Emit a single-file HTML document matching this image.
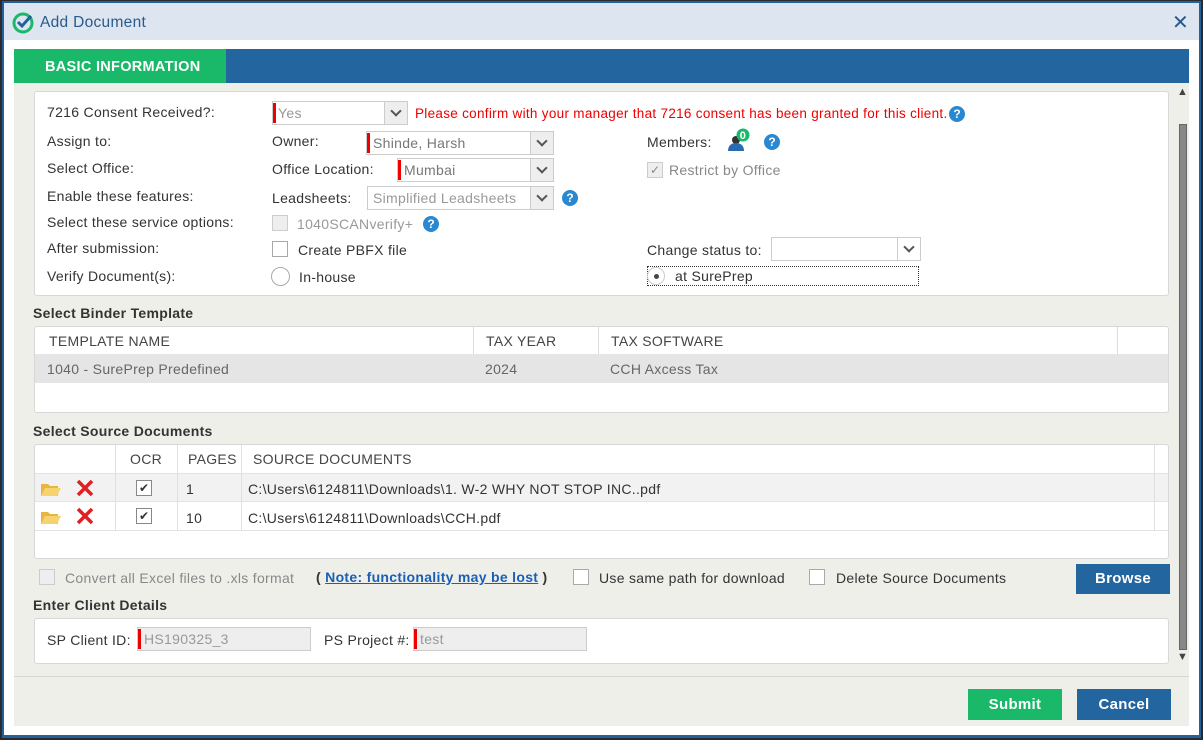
<!DOCTYPE html>
<html><head><meta charset="utf-8"><style>
*{margin:0;padding:0;box-sizing:border-box}
body{width:1203px;height:740px;background:#2b2b2b;font-family:"Liberation Sans",sans-serif;font-size:14px;letter-spacing:0.3px;color:#333;position:relative;overflow:hidden}
.a{position:absolute}
.win{left:2px;top:1px;width:1199px;height:737px;background:#24609c}
.in{left:4px;top:3px;width:1195px;height:732px;background:#fff}
.tb{left:4px;top:3px;width:1195px;height:37px;background:#dde5f0}
.t{white-space:nowrap}
.box{background:#fff;border:1px solid #d8d8d8;border-radius:3px}
.sel{height:24px;border:1px solid #ccc;background:#fff;color:#999}
.sel .ar{position:absolute;right:0;top:0;width:23px;height:22px;border-left:1px solid #ccc;background:#eee}
.sel .ar:after{content:"";position:absolute;left:7px;top:5px;width:6px;height:6px;border-right:2px solid #555;border-bottom:2px solid #555;transform:rotate(45deg)}
.red{position:absolute;left:0;top:1px;width:3px;height:20px;background:#e00}
.q{width:16px;height:16px;border-radius:50%;background:#2a88d0;color:#fff;font-size:12px;font-weight:bold;text-align:center;line-height:16px;letter-spacing:0}
.cb{width:16px;height:16px;border:1px solid #aaa;background:#fff;letter-spacing:0}
.bold{font-weight:bold}
.th{font-size:14px;color:#444}
.btn{color:#fff;font-weight:bold;font-size:15px;text-align:center}
</style></head><body>
<div class="a win"></div>
<div class="a in"></div>
<div class="a tb"></div>
<svg class="a" style="left:12px;top:12px" width="22" height="22" viewBox="0 0 22 22"><circle cx="11" cy="11" r="9" fill="none" stroke="#1ab96a" stroke-width="3"/><path d="M6 10l4 4 9-10" fill="none" stroke="#24609c" stroke-width="3"/></svg>
<div class="a t" style="left:40px;top:14px;font-size:15.5px;color:#2a5a8a">Add Document</div>
<div class="a t" style="left:1172px;top:10px;font-size:20px;color:#2a5a8a">✕</div>

<div class="a" style="left:14px;top:49px;width:1175px;height:34px;background:#23659f"></div>
<div class="a" style="left:14px;top:49px;width:212px;height:34px;background:#1ab96a"></div>
<div class="a t" style="left:45px;top:59px;color:#fff;font-weight:bold;font-size:14.5px">BASIC INFORMATION</div>
<div class="a" style="left:14px;top:83px;width:1175px;height:643px;background:#efefea"></div>
<div class="a" style="left:14px;top:676px;width:1175px;height:1px;background:#d5d5d5"></div>
<div class="a t" style="left:1177px;top:86px;font-size:11px;color:#444">▲</div>
<div class="a" style="left:1179px;top:124px;width:8px;height:526px;background:#888;border:1px solid #666"></div>
<div class="a t" style="left:1177px;top:651px;font-size:11px;color:#444">▼</div>

<div class="a box" style="left:34px;top:91px;width:1135px;height:205px"></div>
<div class="a t" style="left:47px;top:104px">7216 Consent Received?:</div>
<div class="a sel" style="left:272px;top:101px;width:136px"><div class="red"></div><span class="a" style="left:5px;top:3px">Yes</span><div class="ar"></div></div>
<div class="a t" style="left:415px;top:106px;color:#e00;font-size:13.5px">Please confirm with your manager that 7216 consent has been granted for this client.</div>
<div class="a q" style="left:949px;top:106px">?</div>

<div class="a t" style="left:47px;top:133px">Assign to:</div>
<div class="a t" style="left:272px;top:133px">Owner:</div>
<div class="a sel" style="left:366px;top:131px;width:188px"><div class="red"></div><span class="a" style="left:6px;top:3px;color:#777">Shinde, Harsh</span><div class="ar"></div></div>
<div class="a t" style="left:647px;top:134px">Members:</div>
<svg class="a" style="left:726px;top:128px" width="26" height="26"><circle cx="10" cy="12" r="4" fill="#333"/><path d="M2 23c0-6 4-8 8-8s8 2 8 8z" fill="#2a6ab0"/><circle cx="17" cy="7" r="6.5" fill="#1ab96a"/><text x="17" y="11" font-size="11" fill="#fff" font-weight="bold" text-anchor="middle" font-family="Liberation Sans">0</text></svg>
<div class="a q" style="left:764px;top:134px">?</div>

<div class="a t" style="left:47px;top:160px">Select Office:</div>
<div class="a t" style="left:272px;top:161px">Office Location:</div>
<div class="a sel" style="left:397px;top:158px;width:157px"><div class="red"></div><span class="a" style="left:6px;top:3px;color:#777">Mumbai</span><div class="ar"></div></div>
<div class="a cb" style="left:647px;top:162px;background:#eee;border-color:#ccc;color:#888;font-size:12px;text-align:center;line-height:14px">✓</div>
<div class="a t" style="left:669px;top:162px;color:#888">Restrict by Office</div>

<div class="a t" style="left:47px;top:188px">Enable these features:</div>
<div class="a t" style="left:272px;top:190px">Leadsheets:</div>
<div class="a sel" style="left:367px;top:186px;width:187px"><span class="a" style="left:5px;top:3px">Simplified Leadsheets</span><div class="ar"></div></div>
<div class="a q" style="left:562px;top:190px">?</div>

<div class="a t" style="left:47px;top:214px">Select these service options:</div>
<div class="a cb" style="left:272px;top:215px;background:#eee;border-color:#ccc"></div>
<div class="a t" style="left:297px;top:216px;color:#999">1040SCANverify+</div>
<div class="a q" style="left:423px;top:216px">?</div>

<div class="a t" style="left:47px;top:240px">After submission:</div>
<div class="a cb" style="left:272px;top:241px"></div>
<div class="a t" style="left:298px;top:242px">Create PBFX file</div>
<div class="a t" style="left:647px;top:242px">Change status to:</div>
<div class="a sel" style="left:771px;top:237px;width:150px"><div class="ar" style="background:#fff"></div></div>

<div class="a t" style="left:47px;top:268px">Verify Document(s):</div>
<div class="a" style="left:271px;top:267px;width:19px;height:19px;border:1px solid #aaa;border-radius:50%;background:#fff"></div>
<div class="a t" style="left:299px;top:269px">In-house</div>
<div class="a" style="left:647px;top:266px;width:272px;height:20px;border:1px dotted #333"></div>
<div class="a" style="left:647px;top:267px;width:18px;height:18px;border:1px solid #ccc;border-radius:50%;background:#fff"></div>
<div class="a" style="left:654px;top:274px;width:5px;height:5px;border-radius:50%;background:#444"></div>
<div class="a t" style="left:675px;top:268px">at SurePrep</div>

<div class="a t bold" style="left:33px;top:305px">Select Binder Template</div>
<div class="a box" style="left:34px;top:326px;width:1135px;height:87px"></div>
<div class="a" style="left:35px;top:354px;width:1133px;height:29px;background:#e5e5e5"></div>
<div class="a" style="left:473px;top:327px;width:1px;height:27px;background:#ddd"></div>
<div class="a" style="left:598px;top:327px;width:1px;height:27px;background:#ddd"></div>
<div class="a" style="left:1117px;top:327px;width:1px;height:27px;background:#ddd"></div>
<div class="a t th" style="left:49px;top:333px">TEMPLATE NAME</div>
<div class="a t th" style="left:486px;top:333px">TAX YEAR</div>
<div class="a t th" style="left:611px;top:333px">TAX SOFTWARE</div>
<div class="a t" style="left:47px;top:361px;color:#666">1040 - SurePrep Predefined</div>
<div class="a t" style="left:485px;top:361px;color:#666">2024</div>
<div class="a t" style="left:610px;top:361px;color:#666">CCH Axcess Tax</div>

<div class="a t bold" style="left:33px;top:423px">Select Source Documents</div>
<div class="a box" style="left:34px;top:444px;width:1135px;height:115px"></div>
<div class="a" style="left:35px;top:473px;width:1133px;height:29px;background:#f2f2f2;border-top:1px solid #e3e3e3;border-bottom:1px solid #e3e3e3"></div>
<div class="a" style="left:35px;top:530px;width:1133px;height:1px;background:#e3e3e3"></div>
<div class="a" style="left:115px;top:445px;width:1px;height:86px;background:#e0e0e0"></div>
<div class="a" style="left:177px;top:445px;width:1px;height:86px;background:#e0e0e0"></div>
<div class="a" style="left:241px;top:445px;width:1px;height:86px;background:#e0e0e0"></div>
<div class="a" style="left:1154px;top:445px;width:1px;height:86px;background:#e0e0e0"></div>
<div class="a t th" style="left:130px;top:451px">OCR</div>
<div class="a t th" style="left:188px;top:451px">PAGES</div>
<div class="a t th" style="left:253px;top:451px">SOURCE DOCUMENTS</div>
<svg class="a" style="left:40px;top:480px" width="22" height="18"><path d="M1 4h7l2 2h8v10H1z" fill="#e8b640"/><path d="M1 16l4-8h16l-4 8z" fill="#f7d370"/></svg>
<svg class="a" style="left:76px;top:479px" width="18" height="18"><path d="M2 2l14 14M16 2L2 16" stroke="#e02020" stroke-width="3.5"/></svg>
<div class="a cb" style="left:136px;top:480px;border-color:#888;font-size:12px;text-align:center;line-height:14px">✔</div>
<div class="a t" style="left:186px;top:481px">1</div>
<div class="a t" style="left:248px;top:481px">C:\Users\6124811\Downloads\1. W-2 WHY NOT STOP INC..pdf</div>
<svg class="a" style="left:40px;top:508px" width="22" height="18"><path d="M1 4h7l2 2h8v10H1z" fill="#e8b640"/><path d="M1 16l4-8h16l-4 8z" fill="#f7d370"/></svg>
<svg class="a" style="left:76px;top:507px" width="18" height="18"><path d="M2 2l14 14M16 2L2 16" stroke="#e02020" stroke-width="3.5"/></svg>
<div class="a cb" style="left:136px;top:508px;border-color:#888;font-size:12px;text-align:center;line-height:14px">✔</div>
<div class="a t" style="left:186px;top:510px">10</div>
<div class="a t" style="left:248px;top:510px">C:\Users\6124811\Downloads\CCH.pdf</div>

<div class="a cb" style="left:39px;top:569px;background:#eee;border-color:#ccc"></div>
<div class="a t" style="left:65px;top:570px;color:#888">Convert all Excel files to .xls format</div>
<div class="a t bold" style="left:316px;top:569px">( <span style="color:#1a5fb4;text-decoration:underline">Note: functionality may be lost</span> )</div>
<div class="a cb" style="left:573px;top:569px"></div>
<div class="a t" style="left:599px;top:570px">Use same path for download</div>
<div class="a cb" style="left:809px;top:569px"></div>
<div class="a t" style="left:836px;top:570px">Delete Source Documents</div>
<div class="a btn" style="left:1076px;top:564px;width:94px;height:30px;line-height:30px;background:#23659f">Browse</div>

<div class="a t bold" style="left:33px;top:597px">Enter Client Details</div>
<div class="a box" style="left:34px;top:618px;width:1135px;height:46px"></div>
<div class="a t" style="left:47px;top:632px">SP Client ID:</div>
<div class="a sel" style="left:137px;top:627px;width:174px;background:#eee"><div class="red"></div><span class="a" style="left:6px;top:3px">HS190325_3</span></div>
<div class="a t" style="left:324px;top:632px">PS Project #:</div>
<div class="a sel" style="left:413px;top:627px;width:174px;background:#eee"><div class="red"></div><span class="a" style="left:6px;top:3px">test</span></div>

<div class="a btn" style="left:968px;top:689px;width:94px;height:31px;line-height:31px;background:#1ab96a">Submit</div>
<div class="a btn" style="left:1077px;top:689px;width:94px;height:31px;line-height:31px;background:#23659f">Cancel</div>
</body></html>
